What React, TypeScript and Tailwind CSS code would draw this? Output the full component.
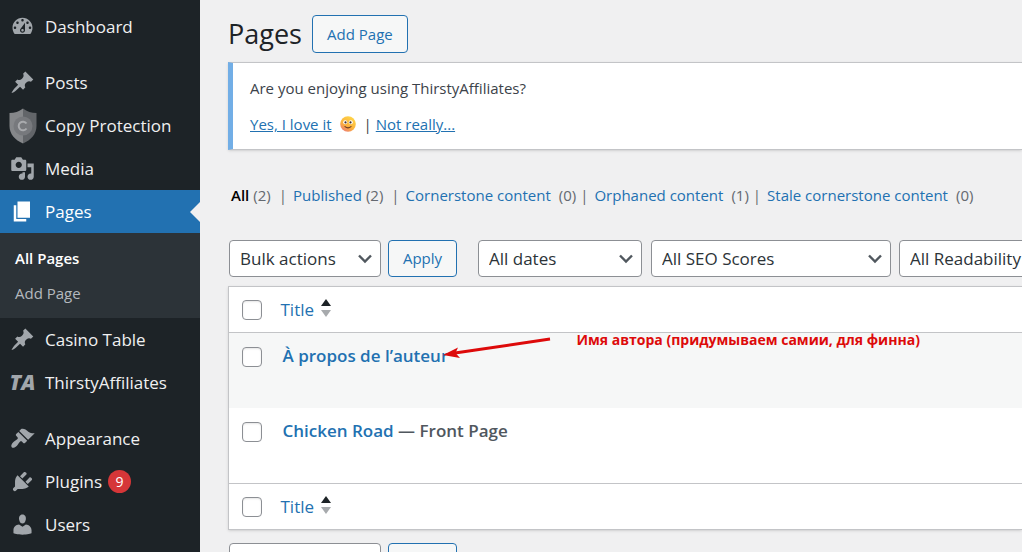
import type { ReactNode } from "react";
import clsx from "clsx";

// 20x20 admin glyphs
const ICONS = {
  dashboard:
    "M3.76 16h12.48c1.1-1.37 1.76-3.11 1.76-5 0-4.42-3.58-8-8-8s-8 3.58-8 8c0 1.89.66 3.63 1.76 5zM10 4c.55 0 1 .45 1 1s-.45 1-1 1-1-.45-1-1 .45-1 1-1zM6 6c.55 0 1 .45 1 1s-.45 1-1 1-1-.45-1-1 .45-1 1-1zm8 0c.55 0 1 .45 1 1s-.45 1-1 1-1-.45-1-1 .45-1 1-1zm-5.37 5.55L12 7v6c0 1.1-.9 2-2 2s-2-.9-2-2c0-.57.24-1.08.63-1.45zM4 10c.55 0 1 .45 1 1s-.45 1-1 1-1-.45-1-1 .45-1 1-1zm12 0c.55 0 1 .45 1 1s-.45 1-1 1-1-.45-1-1 .45-1 1-1zm-5 3c0-.55-.45-1-1-1s-1 .45-1 1 .45 1 1 1 1-.45 1-1z",
  post: "M10.44 3.02l1.82-1.82 6.36 6.35-1.83 1.82c-1.05-.68-2.48-.57-3.41.36l-.75.75c-.92.93-1.04 2.35-.35 3.41l-1.83 1.82-2.41-2.41-2.8 2.79c-.42.42-3.38 2.71-3.8 2.29s1.86-3.39 2.28-3.81l2.79-2.79L4.1 9.36l1.83-1.82c1.05.69 2.48.57 3.4-.36l.75-.75c.93-.92 1.05-2.35.36-3.41z",
  media:
    "M13 11V4c0-.55-.45-1-1-1h-1.67L9 1H5L3.67 3H2c-.55 0-1 .45-1 1v7c0 .55.45 1 1 1h10c.55 0 1-.45 1-1zM7 4.5c1.38 0 2.5 1.12 2.5 2.5S8.38 9.5 7 9.5 4.5 8.38 4.5 7 5.62 4.5 7 4.5zM14 6h5v10.5c0 1.38-1.12 2.5-2.5 2.5S14 17.88 14 16.5s1.12-2.5 2.5-2.5c.17 0 .34.02.5.05V9h-3V6zm-4 8.05V13h2v3.5c0 1.38-1.12 2.5-2.5 2.5S7 17.88 7 16.5 8.12 14 9.5 14c.17 0 .34.02.5.05z",
  page: "M6 15V2h10v13H6zm-1 1h8v2H3V5h2v11z",
  appearance:
    "M14.48 11.06L7.41 3.99l1.5-1.5c.5-.56 2.3-.47 3.51.32 1.21.8 1.43 1.28 2.91 2.1 1.18.64 2.45 1.26 4.45.85zm-.71.71L6.7 4.7 4.93 6.47c-.39.39-.39 1.02 0 1.41l1.06 1.06c.39.39.39 1.03 0 1.42-.6.6-1.43 1.11-2.21 1.69-.35.26-.7.53-1.01.84C1.43 14.23.4 16.08 1.4 17.07c.99 1 2.84-.03 4.18-1.36.31-.31.58-.66.85-1.02.57-.78 1.08-1.61 1.69-2.21.39-.39 1.02-.39 1.41 0l1.06 1.06c.39.39 1.02.39 1.41 0z",
  plugins:
    "M13.11 4.36L9.87 7.6 8 5.73l3.24-3.24c.35-.34 1.05-.2 1.56.32.52.51.66 1.21.31 1.55zm-8 1.77l.91-1.12 9.01 9.01-1.19.84c-.71.71-2.63 1.16-3.82 1.16H6.14L4.9 17.26c-.59.59-1.54.59-2.12 0-.59-.58-.59-1.53 0-2.12l1.24-1.24v-3.88c0-1.13.4-3.19 1.09-3.89zm7.26 3.97l3.24-3.24c.34-.35 1.04-.21 1.55.31.52.51.66 1.21.31 1.55l-3.24 3.25z",
  users:
    "M10 9.25c-2.27 0-2.73-3.44-2.73-3.44C7 4.02 7.82 2 9.97 2c2.16 0 2.98 2.02 2.71 3.81 0 0-.41 3.44-2.68 3.44zm0 2.57L12.72 10c2.39 0 4.52 2.33 4.52 4.53v2.49s-3.65 1.13-7.24 1.13c-3.65 0-7.24-1.13-7.24-1.13v-2.49c0-2.25 1.94-4.48 4.47-4.48z",
};

function Glyph({ name }: { name: keyof typeof ICONS }) {
  return (
    <svg viewBox="0 0 20 20" className="size-[25px]" fill="currentColor" fillRule="evenodd" aria-hidden="true">
      <path d={ICONS[name]} />
    </svg>
  );
}

function ShieldIcon() {
  return (
    <svg viewBox="0 0 28 36" className="h-9 w-7" aria-hidden="true">
      <path d="M14 .5C10 3.600 5.500 5 .5 5v13c0 8 5.500 14 13.500 17.500z" fill="#85878a" />
      <path d="M14 .5c4 3.100 8.500 4.500 13.500 4.500v13c0 8-5.500 14-13.500 17.500z" fill="#626569" />
      <circle cx="14" cy="18" r="9.500" fill="#77797d" />
      <path d="M17.500 15.500a4.300 4.300 0 1 0 0 5" fill="none" stroke="#a9abae" strokeWidth="2" />
    </svg>
  );
}

function Smiley() {
  return (
    <svg viewBox="0 0 16 16" className="mx-2 inline-block size-4 align-[-2px]" role="img" aria-label="smile">
      <defs>
        <linearGradient id="face" x1="0.800" y1="0" x2="0.200" y2="1">
          <stop offset="0" stopColor="#ffd84a" />
          <stop offset="0.600" stopColor="#fbb13c" />
          <stop offset="1" stopColor="#ec7a78" />
        </linearGradient>
      </defs>
      <circle cx="8" cy="8" r="7.800" fill="url(#face)" />
      <circle cx="5.200" cy="6.300" r="2" fill="#fff" />
      <circle cx="10.800" cy="6.300" r="2" fill="#fff" />
      <circle cx="5.500" cy="6.400" r="1.100" fill="#43302f" />
      <circle cx="10.500" cy="6.400" r="1.100" fill="#43302f" />
      <path d="M5 10.600q3 2.400 6 0" fill="none" stroke="#6d3b25" strokeWidth="1.200" strokeLinecap="round" />
    </svg>
  );
}

interface MenuItemProps {
  icon: ReactNode;
  label: string;
  active?: boolean;
  count?: number;
}

function MenuItem({ icon, label, active, count }: MenuItemProps) {
  return (
    <a
      href="#"
      className={clsx(
        "relative flex h-[43px] items-center text-[17px]",
        active ? "bg-[#2271b1] text-white" : "text-[#f0f0f1]"
      )}
    >
      <span className={clsx("flex w-[45px] justify-center", active ? "text-white" : "text-[#a1a6ab]")}>
        {icon}
      </span>
      {label}
      {count && (
        <span className="ml-1.5 flex size-[23px] items-center justify-center rounded-full bg-[#d63638] text-sm text-white">
          {count}
        </span>
      )}
      {active && (
        <span className="absolute right-0 top-3 border-y-10 border-r-10 border-y-transparent border-r-[#f0f0f1]" />
      )}
    </a>
  );
}

function Sidebar() {
  return (
    <nav className="w-[200px] shrink-0 bg-[#1d2327] pt-[5px]">
      <MenuItem icon={<Glyph name="dashboard" />} label="Dashboard" />
      <div className="h-[13px]" />
      <MenuItem icon={<Glyph name="post" />} label="Posts" />
      <MenuItem icon={<ShieldIcon />} label="Copy Protection" />
      <MenuItem icon={<Glyph name="media" />} label="Media" />
      <MenuItem icon={<Glyph name="page" />} label="Pages" active />
      <div className="flex h-[85px] flex-col bg-[#2c3338] px-[15px] py-[7px] text-[15px]">
        <a href="#" className="flex flex-1 items-center font-semibold text-white">
          All Pages
        </a>
        <a href="#" className="flex flex-1 items-center text-[#b4b9be]">
          Add Page
        </a>
      </div>
      <MenuItem icon={<Glyph name="post" />} label="Casino Table" />
      <MenuItem
        icon={<span className="text-[21px] font-extrabold italic leading-none">TA</span>}
        label="ThirstyAffiliates"
      />
      <div className="h-[13px]" />
      <MenuItem icon={<Glyph name="appearance" />} label="Appearance" />
      <MenuItem icon={<Glyph name="plugins" />} label="Plugins" count={9} />
      <MenuItem icon={<Glyph name="users" />} label="Users" />
    </nav>
  );
}

const views = [
  { label: "All", count: 2, current: true },
  { label: "Published", count: 2 },
  { label: "Cornerstone content", count: 0, wide: true },
  { label: "Orphaned content", count: 1, wide: true },
  { label: "Stale cornerstone content", count: 0, wide: true },
];

function ViewLinks() {
  return (
    <ul className="mt-[33px] flex whitespace-nowrap pl-[3px] text-[15px] leading-6 text-[#646970]">
      {views.map((view, i) => (
        <li key={view.label} className="flex">
          <a href="#" className={view.current ? "font-semibold text-black" : "text-[#2271b1]"}>
            {view.label}
          </a>
          <span className={view.wide ? "ml-2" : "ml-1"}>({view.count})</span>
          {i < views.length - 1 && <span className={clsx("mr-1.5", view.wide ? "ml-1" : "ml-2")}>|</span>}
        </li>
      ))}
    </ul>
  );
}

function Select({ label, className }: { label: string; className: string }) {
  return (
    <div className={clsx("relative shrink-0", className)}>
      <select
        aria-label={label}
        className="h-[37px] w-full appearance-none rounded border border-[#8c8f94] bg-white pl-[10px] text-[17px] text-[#2c3338]"
      >
        <option>{label}</option>
      </select>
      <svg
        viewBox="0 0 20 20"
        className="pointer-events-none absolute right-[6px] top-[9px] size-5"
        fill="none"
        stroke="#50575e"
        strokeWidth="2.400"
        aria-hidden="true"
      >
        <path d="M4 6.500l6 6 6-6" />
      </svg>
    </div>
  );
}

function OutlineButton({ children, className }: { children: ReactNode; className?: string }) {
  return (
    <button
      className={clsx(
        "shrink-0 rounded border border-[#2271b1] bg-[#f6f7f7] text-[15px] text-[#2271b1]",
        className
      )}
    >
      {children}
    </button>
  );
}

function BulkActions() {
  return (
    <>
      <Select label="Bulk actions" className="w-[152px]" />
      <OutlineButton className="ml-[7px] h-[37px] w-[69px]">Apply</OutlineButton>
    </>
  );
}

function Checkbox({ label }: { label: string }) {
  return (
    <input
      type="checkbox"
      aria-label={label}
      className="block size-5 appearance-none rounded border border-[#8c8f94] bg-white shadow-[inset_0_1px_2px_rgba(0,0,0,0.1)]"
    />
  );
}

function TitleHeading() {
  return (
    <tr className="h-[46px]">
      <th className="w-[52px] pl-[13px]">
        <Checkbox label="Select all" />
      </th>
      <th className="text-left font-normal">
        <a href="#" className="flex items-center gap-[7px] text-[17px] text-[#2271b1]">
          Title
          <svg viewBox="0 0 10 18" className="mb-1 h-[18px] w-[10px]" aria-hidden="true">
            <path d="M5 0l5 7H0z" fill="#1d2327" />
            <path d="M5 18l5-7H0z" fill="#a7aaad" />
          </svg>
        </a>
      </th>
    </tr>
  );
}

function Annotation() {
  return (
    <div className="pointer-events-none absolute left-[160px] top-[-10px] flex items-start text-[#dd0a0a]">
      <svg viewBox="0 0 108 26" className="h-[26px] w-[108px]" aria-hidden="true">
        <path d="M107 5L12 19" stroke="currentColor" strokeWidth="3" />
        <path d="M0 21L15 13.500L12.500 19L17 24z" fill="currentColor" />
      </svg>
      <span className="ml-[26px] whitespace-nowrap text-sm font-bold leading-3">
        Имя автора (придумываем самии, для финна)
      </span>
    </div>
  );
}

function PagesTable() {
  return (
    <table className="mt-[9px] w-full border-y border-l border-[#c3c4c7] bg-white shadow-sm">
      <thead className="border-b border-[#c3c4c7]">
        <TitleHeading />
      </thead>
      <tbody className="text-[17px] font-semibold leading-6">
        <tr className="h-[75px] bg-[#f6f7f7] align-top">
          <td className="pl-[13px] pt-[14px]">
            <Checkbox label="Select À propos de l’auteur" />
          </td>
          <td className="pl-[2px] pt-[11px]">
            <div className="relative">
              <a href="#" className="text-[#2271b1]">
                À propos de l’auteur
              </a>
              <Annotation />
            </div>
          </td>
        </tr>
        <tr className="h-[76px] align-top">
          <td className="pl-[13px] pt-[14px]">
            <Checkbox label="Select Chicken Road" />
          </td>
          <td className="pl-[2px] pt-[11px] text-[#50575e]">
            <a href="#" className="text-[#2271b1]">
              Chicken Road
            </a>{" "}
            — Front Page
          </td>
        </tr>
      </tbody>
      <tfoot className="border-t border-[#c3c4c7]">
        <TitleHeading />
      </tfoot>
    </table>
  );
}

export default function App() {
  return (
    <div className="flex h-screen overflow-hidden bg-[#f0f0f1] font-['Open_Sans','Noto_Sans',sans-serif] text-[#3c434a]">
      <Sidebar />
      <main className="min-w-0 flex-1 overflow-hidden pl-7 pt-[15px]">
        <div className="flex items-center gap-[10px]">
          <h1 className="text-[27px] leading-[38px] text-[#1d2327]">Pages</h1>
          <OutlineButton className="h-[38px] w-24">Add Page</OutlineButton>
        </div>

        {/* Review notice */}
        <div className="mt-[9px] border-y border-l-[5px] border-y-[#c3c4c7] border-l-[#72aee6] bg-white px-[17px] py-[13px] text-[15px] leading-6 shadow-sm">
          <p>Are you enjoying using ThirstyAffiliates?</p>
          <p className="mt-3">
            <a href="#" className="text-[#2271b1] underline">
              Yes, I love it
            </a>
            <Smiley />|{" "}
            <a href="#" className="text-[#2271b1] underline">
              Not really...
            </a>
          </p>
        </div>

        <ViewLinks />

        {/* Filters */}
        <div className="mt-[33px] flex pl-px">
          <BulkActions />
          <Select label="All dates" className="ml-[21px] w-[164px]" />
          <Select label="All SEO Scores" className="ml-[9px] w-[240px]" />
          <Select label="All Readability Scores" className="ml-2 w-[240px]" />
        </div>

        <PagesTable />

        <div className="mt-[13px] flex pl-px">
          <BulkActions />
        </div>
      </main>
    </div>
  );
}
